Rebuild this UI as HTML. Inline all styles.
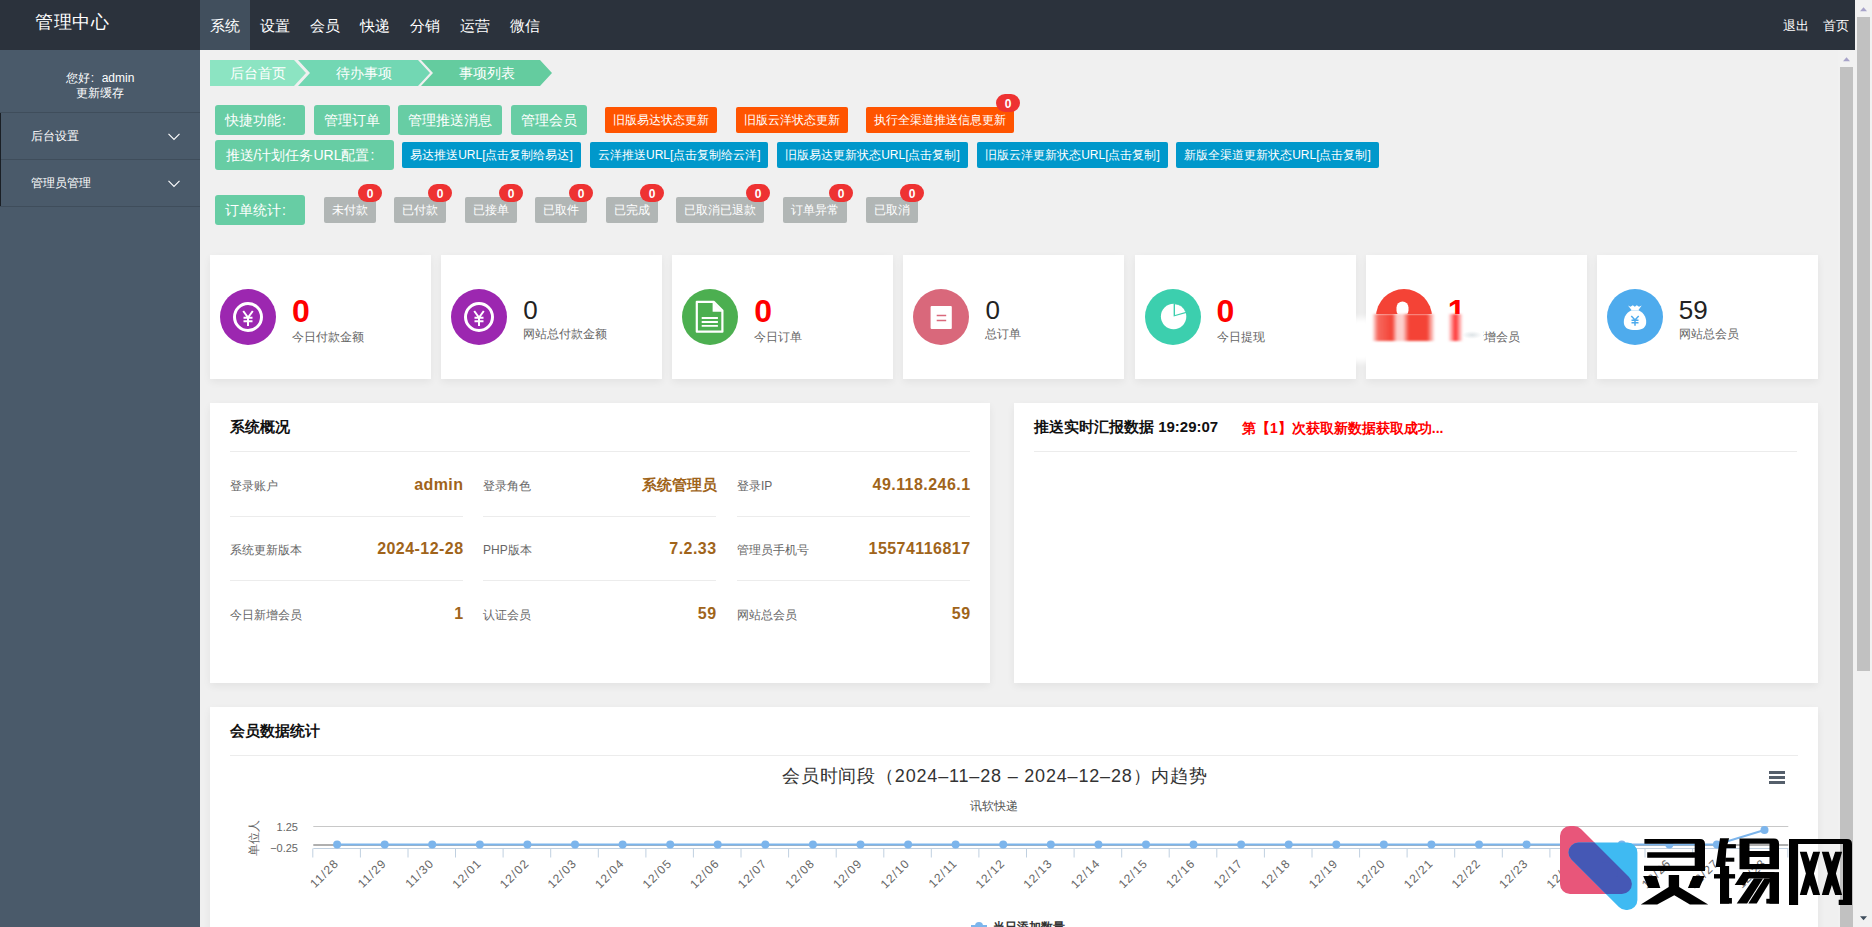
<!DOCTYPE html>
<html><head><meta charset="utf-8">
<style>
*{box-sizing:border-box;margin:0;padding:0}
html,body{width:1872px;height:927px;overflow:hidden}
body{position:relative;background:#f0f0f0;font-family:"Liberation Sans",sans-serif;color:#333}
.abs{position:absolute}
#hdr{left:0;top:0;width:1855px;height:50px;background:#2b323c}
#logo{left:35px;top:10px;font-size:18px;color:#fff;line-height:24px;letter-spacing:0.5px}
.nav{top:0;height:50px;width:50px;color:#fff;font-size:15px;line-height:52px;text-align:center}
.nav.on{background:#414f5d}
.tr{top:0;height:50px;color:#fff;font-size:13px;line-height:52px}
#side{left:0;top:50px;width:200px;height:877px;background:#4a5a6a}
#user{left:0;top:70.5px;width:200px;text-align:center;color:#fff;font-size:12px;line-height:15.5px}
.mi{left:0;width:200px;height:47px;border-top:1px solid #3f4d5b;color:#fff;font-size:12px;line-height:47.5px;padding-left:31px}
.mi svg{position:absolute;left:168px;top:19.5px}
#sideb{left:0;top:113px;width:1px;height:93px;background:#1a1f25}
/* scrollbars */
.sb{background:#f1f1f1}
.thumb{background:#c1c1c1}
/* content */
.bc{top:60px;height:26px}
.btn{position:absolute;color:#fff;white-space:nowrap;text-align:center;border-radius:3px}
.g{background:#67cda4;height:30px;line-height:30px;font-size:14px;padding:0 10px}
.o{background:#ff5400;height:26px;line-height:26px;font-size:12px;padding:0 8px;border-radius:2px}
.b{background:#0098cb;height:26px;line-height:26px;font-size:12px;padding:0 8px;border-radius:2px}
.gr{background:#b1b6b5;height:26px;line-height:26px;font-size:12px;padding:0 8px;border-radius:2px}
.badge{position:absolute;width:24px;height:18px;border-radius:9px;background:#ee3232;color:#fff;font-size:12px;font-weight:bold;line-height:20px;text-align:center}
.card{position:absolute;background:#fff;box-shadow:0 3px 8px rgba(0,0,0,0.06)}
.stat{top:255px;width:221px;height:124px}
.ico{position:absolute;left:10px;top:34px;width:56px;height:56px;border-radius:50%}
.ico svg{position:absolute;left:0;top:0}
.num{position:absolute;left:82px;font-size:27px;line-height:30px}
.num.r{color:#f00;font-weight:bold;top:38px;font-size:32px;line-height:36px}
.num.k{color:#222;top:40px;font-size:26px;line-height:30px}
.lbl{position:absolute;left:82px;font-size:12px;color:#666;line-height:14px;white-space:nowrap}
.ttl{position:absolute;left:20px;font-size:15px;font-weight:bold;color:#111;line-height:20px}
.sep{position:absolute;height:1px;background:#ececec}
.rl{position:absolute;font-size:12px;color:#666;line-height:16px}
.rv{position:absolute;font-size:16px;font-weight:bold;color:#a0641a;line-height:18px;text-align:right;letter-spacing:0.45px;margin-right:-0.45px}
</style></head><body>
<!-- header -->
<div id="hdr" class="abs"></div>
<div id="logo" class="abs">管理中心</div>
<div class="abs nav on" style="left:200px">系统</div>
<div class="abs nav" style="left:250px">设置</div>
<div class="abs nav" style="left:300px">会员</div>
<div class="abs nav" style="left:350px">快递</div>
<div class="abs nav" style="left:400px">分销</div>
<div class="abs nav" style="left:450px">运营</div>
<div class="abs nav" style="left:500px">微信</div>
<div class="abs tr" style="left:1783px">退出</div>
<div class="abs tr" style="left:1823px">首页</div>

<!-- sidebar -->
<div id="side" class="abs"></div>
<div id="user" class="abs">您好<span style="display:inline-block;width:12px;text-align:left;padding-left:1px">:</span>admin<br>更新缓存</div>
<div class="abs mi" style="top:112px">后台设置<svg width="12" height="8" viewBox="0 0 12 8"><path d="M0.5 0.8 L6 6.5 L11.5 0.8" fill="none" stroke="#fff" stroke-width="1.1"/></svg></div>
<div class="abs mi" style="top:159px">管理员管理<svg width="12" height="8" viewBox="0 0 12 8"><path d="M0.5 0.8 L6 6.5 L11.5 0.8" fill="none" stroke="#fff" stroke-width="1.1"/></svg></div>
<div class="abs" style="left:0;top:206px;width:200px;height:1px;background:#3f4d5b"></div>
<div id="sideb" class="abs"></div>

<!-- content area -->
<!-- breadcrumb -->
<svg class="abs" style="left:200px;top:50px" width="400" height="50">
<polygon points="10,10 94,10 106,23 94,36 10,36" fill="#8ce4c2"/>
<polygon points="98,10 218,10 230,23 218,36 98,36 110,23" fill="#72d7b3"/>
<polygon points="221,10 340,10 352,23 340,36 221,36 233,23" fill="#64cc9f"/>
</svg>
<div class="abs" style="left:210px;top:64px;width:96px;text-align:center;color:#fff;font-size:14px;line-height:18px">后台首页</div>
<div class="abs" style="left:310px;top:64px;width:108px;text-align:center;color:#fff;font-size:14px;line-height:18px">待办事项</div>
<div class="abs" style="left:433px;top:64px;width:108px;text-align:center;color:#fff;font-size:14px;line-height:18px">事项列表</div>

<!-- row 1 -->
<div class="btn g" style="left:215px;top:105px;width:90px">快捷功能<span style="display:inline-block;width:14px;text-align:left;padding-left:1px">:</span></div>
<div class="btn g" style="left:314px;top:105px;width:76px">管理订单</div>
<div class="btn g" style="left:398px;top:105px;width:104px">管理推送消息</div>
<div class="btn g" style="left:511px;top:105px;width:76px">管理会员</div>
<div class="btn o" style="left:605px;top:107px;width:112px">旧版易达状态更新</div>
<div class="btn o" style="left:736px;top:107px;width:112px">旧版云洋状态更新</div>
<div class="btn o" style="left:866px;top:107px;width:148px">执行全渠道推送信息更新</div>
<div class="badge" style="left:996px;top:94px">0</div>
<!-- row 2 -->
<div class="btn g" style="left:215px;top:140px;width:179px">推送/计划任务URL配置<span style="display:inline-block;width:14px;text-align:left;padding-left:1px">:</span></div>
<div class="btn b" style="left:402px;top:142px;width:179px">易达推送URL[点击复制给易达]</div>
<div class="btn b" style="left:590px;top:142px;width:178px">云洋推送URL[点击复制给云洋]</div>
<div class="btn b" style="left:777px;top:142px;width:191px">旧版易达更新状态URL[点击复制]</div>
<div class="btn b" style="left:977px;top:142px;width:191px">旧版云洋更新状态URL[点击复制]</div>
<div class="btn b" style="left:1176px;top:142px;width:203px">新版全渠道更新状态URL[点击复制]</div>
<!-- row 3 -->
<div class="btn g" style="left:215px;top:195px;width:90px">订单统计<span style="display:inline-block;width:14px;text-align:left;padding-left:1px">:</span></div>
<div class="btn gr" style="left:324px;top:197px;width:52px">未付款</div>
<div class="badge" style="left:358px;top:184px">0</div>
<div class="btn gr" style="left:394px;top:197px;width:52px">已付款</div>
<div class="badge" style="left:428px;top:184px">0</div>
<div class="btn gr" style="left:465px;top:197px;width:52px">已接单</div>
<div class="badge" style="left:499px;top:184px">0</div>
<div class="btn gr" style="left:535px;top:197px;width:52px">已取件</div>
<div class="badge" style="left:569px;top:184px">0</div>
<div class="btn gr" style="left:606px;top:197px;width:52px">已完成</div>
<div class="badge" style="left:640px;top:184px">0</div>
<div class="btn gr" style="left:676px;top:197px;width:88px">已取消已退款</div>
<div class="badge" style="left:746px;top:184px">0</div>
<div class="btn gr" style="left:783px;top:197px;width:64px">订单异常</div>
<div class="badge" style="left:829px;top:184px">0</div>
<div class="btn gr" style="left:866px;top:197px;width:52px">已取消</div>
<div class="badge" style="left:900px;top:184px">0</div>

<!-- stat cards -->
<div class="card stat" style="left:210.00px">
  <div class="ico" style="background:#9c27b0"><svg width="56" height="56" viewBox="0 0 56 56"><circle cx="28" cy="28" r="13.5" fill="none" stroke="#fff" stroke-width="3"/><path d="M23.2 22 L28 28.5 L32.8 22 M28 28.5 V37 M23.5 28.7 H32.5 M23.5 32.3 H32.5" fill="none" stroke="#fff" stroke-width="2"/></svg></div>
  <div class="num r">0</div>
  <div class="lbl" style="top:75px">今日付款金额</div>
</div>
<div class="card stat" style="left:441.14px">
  <div class="ico" style="background:#9c27b0"><svg width="56" height="56" viewBox="0 0 56 56"><circle cx="28" cy="28" r="13.5" fill="none" stroke="#fff" stroke-width="3"/><path d="M23.2 22 L28 28.5 L32.8 22 M28 28.5 V37 M23.5 28.7 H32.5 M23.5 32.3 H32.5" fill="none" stroke="#fff" stroke-width="2"/></svg></div>
  <div class="num k">0</div>
  <div class="lbl" style="top:72px">网站总付款金额</div>
</div>
<div class="card stat" style="left:672.29px">
  <div class="ico" style="background:#4caf50"><svg width="56" height="56" viewBox="0 0 56 56"><path d="M14.8 12.8 H31.7 L40.4 21.6 V42.7 H14.8 Z" fill="none" stroke="#fff" stroke-width="2.2" stroke-linejoin="round"/><path d="M30.6 12.8 V22.7 H40.4 Z" fill="#fff"/><path d="M19.7 29 H35.9 M19.7 33 H35.9 M19.7 36.9 H35.9" stroke="#fff" stroke-width="1.8"/></svg></div>
  <div class="num r">0</div>
  <div class="lbl" style="top:75px">今日订单</div>
</div>
<div class="card stat" style="left:903.43px">
  <div class="ico" style="background:#d9687b"><svg width="56" height="56" viewBox="0 0 56 56"><rect x="17.6" y="17" width="21.2" height="23" rx="1" fill="#fff"/><path d="M23.7 26.5 H33.2 M23.7 31.5 H33.2" stroke="#d9687b" stroke-width="1.5"/></svg></div>
  <div class="num k">0</div>
  <div class="lbl" style="top:72px">总订单</div>
</div>
<div class="card stat" style="left:1134.57px">
  <div class="ico" style="background:#3ccfae"><svg width="56" height="56" viewBox="0 0 56 56"><circle cx="28.6" cy="27.5" r="12.7" fill="#fff"/><path d="M28.6 27.5 L28.6 14.3 A13.2 13.2 0 0 1 41.3 24 Z" fill="#3ccfae"/><path d="M30 26 L30 15.2 A12.5 12.5 0 0 1 40.3 22.9 Z" fill="#fff"/></svg></div>
  <div class="num r">0</div>
  <div class="lbl" style="top:75px">今日提现</div>
</div>
<div class="card stat" style="left:1365.71px">
  <div class="ico" style="background:#f44336"><svg width="56" height="56" viewBox="0 0 56 56"><rect x="20.5" y="12.5" width="12" height="15" rx="6" fill="#fff"/></svg></div>
  <div class="num r">1</div>
  <div class="lbl" style="top:75px">今日新增会员</div>
</div>
<div class="card stat" style="left:1596.86px">
  <div class="ico" style="background:#4eabed"><svg width="56" height="56" viewBox="0 0 56 56"><path d="M21 16.5 L23.5 17.8 L25.8 16.2 L27.8 17.8 L29.8 16.2 L32 17.8 L34.7 16.5 L31.5 21 H24.5Z" fill="#fff"/><path d="M24.5 21.3 H31.5 C37.5 24 40 30 39 35 C38 39.5 34 41 28 41 C22 41 18 39.5 17 35 C16 30 18.5 24 24.5 21.3Z" fill="#fff"/><path d="M24.3 27 L28 31 L31.7 27 M28 31 V36.8 M24.5 31.3 H31.5 M24.5 33.8 H31.5" fill="none" stroke="#4eabed" stroke-width="1.5"/></svg></div>
  <div class="num k">59</div>
  <div class="lbl" style="top:72px">网站总会员</div>
</div>
<!-- blur artifact over card 6 -->
<div class="abs" style="left:1350px;top:318px;width:22px;height:44px;background:#fff;filter:blur(3px)"></div>
<div class="abs" style="left:1366px;top:314px;width:117px;height:64px;background:#fff"></div>
<div class="abs" style="left:1372px;top:314px;width:64px;height:27px;filter:blur(1.2px);background:linear-gradient(to right,rgba(244,67,54,0) 0,rgba(244,67,54,.8) 6px,#f44336 20px,rgba(244,67,54,.25) 25px,rgba(244,67,54,.25) 31px,#f44336 37px,#f44336 55px,rgba(244,67,54,0) 63px)"></div>
<div class="abs" style="left:1448px;top:314px;width:15px;height:27px;filter:blur(1px);background:linear-gradient(to right,rgba(255,0,0,0),rgba(255,30,30,.9) 50%,rgba(255,0,0,0))"></div>
<div class="abs" style="left:1462px;top:331px;width:20px;height:8px;background:radial-gradient(ellipse at center,rgba(200,210,215,.6),rgba(255,255,255,0) 70%)"></div>

<!-- system overview -->
<div class="card" style="left:210px;top:403px;width:780px;height:280px">
  <div class="ttl" style="top:14px">系统概况</div>
  <div class="sep" style="left:20px;top:48px;width:740px"></div>
  <div class="rl" style="left:20px;top:74.5px">登录账户</div><div class="rv" style="left:20px;top:73px;width:233.5px">admin</div>
  <div class="rl" style="left:273px;top:74.5px">登录角色</div><div class="rv" style="left:273px;top:73px;width:233.5px;font-size:15px;letter-spacing:0">系统管理员</div>
  <div class="rl" style="left:527px;top:74.5px">登录IP</div><div class="rv" style="left:527px;top:73px;width:233.5px">49.118.246.1</div>
  <div class="sep" style="left:20px;top:113px;width:233px"></div><div class="sep" style="left:273px;top:113px;width:233px"></div><div class="sep" style="left:527px;top:113px;width:233px"></div>
  <div class="rl" style="left:20px;top:138.5px">系统更新版本</div><div class="rv" style="left:20px;top:137px;width:233.5px">2024-12-28</div>
  <div class="rl" style="left:273px;top:138.5px">PHP版本</div><div class="rv" style="left:273px;top:137px;width:233.5px">7.2.33</div>
  <div class="rl" style="left:527px;top:138.5px">管理员手机号</div><div class="rv" style="left:527px;top:137px;width:233.5px">15574116817</div>
  <div class="sep" style="left:20px;top:177px;width:233px"></div><div class="sep" style="left:273px;top:177px;width:233px"></div><div class="sep" style="left:527px;top:177px;width:233px"></div>
  <div class="rl" style="left:20px;top:203.5px">今日新增会员</div><div class="rv" style="left:20px;top:202px;width:233.5px">1</div>
  <div class="rl" style="left:273px;top:203.5px">认证会员</div><div class="rv" style="left:273px;top:202px;width:233.5px">59</div>
  <div class="rl" style="left:527px;top:203.5px">网站总会员</div><div class="rv" style="left:527px;top:202px;width:233.5px">59</div>
</div>
<!-- push report -->
<div class="card" style="left:1014px;top:403px;width:804px;height:280px">
  <div class="ttl" style="top:14px;font-size:15px">推送实时汇报数据 19:29:07</div>
  <div class="abs" style="left:228px;top:15px;font-size:14px;font-weight:bold;color:#f00;line-height:20px">第【1】次获取新数据获取成功...</div>
  <div class="sep" style="left:20px;top:48px;width:763px"></div>
</div>
<!-- member stats -->
<div class="card" style="left:210px;top:707px;width:1608px;height:240px">
  <div class="ttl" style="top:14px">会员数据统计</div>
  <div class="sep" style="left:20px;top:48px;width:1568px"></div>
</div>
<div id="chart"></div>
<svg class="abs" style="left:0;top:0" width="1872" height="927" viewBox="0 0 1872 927" font-family="Liberation Sans, sans-serif">
<text x="782" y="782" font-size="18" fill="#333" textLength="425" lengthAdjust="spacing">会员时间段（2024–11–28 – 2024–12–28）内趋势</text>
<text x="993.6" y="809.5" text-anchor="middle" font-size="12" fill="#555">讯软快递</text>
<path d="M1769 772.5 H1785 M1769 777.5 H1785 M1769 782.5 H1785" stroke="#555f6b" stroke-width="3"/>
<text x="257.5" y="838" transform="rotate(-90 257.5 838)" text-anchor="middle" font-size="12" fill="#666">单位人</text>
<text x="298" y="831" text-anchor="end" font-size="11" fill="#666">1.25</text>
<text x="298" y="852" text-anchor="end" font-size="11" fill="#666">−0.25</text>
<path d="M313.3 826.5 H1788.3" stroke="#c8c8c8" stroke-width="1"/>
<path d="M313.3 845 H1788.3" stroke="#606060" stroke-width="1"/>
<path d="M313.3 848.5 H1788.3" stroke="#c0d0e0" stroke-width="1"/>
<path d="M312.8 848.5 V857.5 M360.4 848.5 V857.5 M408.0 848.5 V857.5 M455.5 848.5 V857.5 M503.1 848.5 V857.5 M550.7 848.5 V857.5 M598.3 848.5 V857.5 M645.9 848.5 V857.5 M693.4 848.5 V857.5 M741.0 848.5 V857.5 M788.6 848.5 V857.5 M836.2 848.5 V857.5 M883.8 848.5 V857.5 M931.3 848.5 V857.5 M978.9 848.5 V857.5 M1026.5 848.5 V857.5 M1074.1 848.5 V857.5 M1121.7 848.5 V857.5 M1169.2 848.5 V857.5 M1216.8 848.5 V857.5 M1264.4 848.5 V857.5 M1312.0 848.5 V857.5 M1359.6 848.5 V857.5 M1407.1 848.5 V857.5 M1454.7 848.5 V857.5 M1502.3 848.5 V857.5 M1549.9 848.5 V857.5 M1597.5 848.5 V857.5 M1645.0 848.5 V857.5 M1692.6 848.5 V857.5 M1740.2 848.5 V857.5 M1787.8 848.5 V857.5" stroke="#c0d0e0" stroke-width="1"/>
<polyline points="337.1,844.5 384.7,844.5 432.2,844.5 479.8,844.5 527.4,844.5 575.0,844.5 622.6,844.5 670.2,844.5 717.7,844.5 765.3,844.5 812.9,844.5 860.5,844.5 908.1,844.5 955.6,844.5 1003.2,844.5 1050.8,844.5 1098.4,844.5 1146.0,844.5 1193.5,844.5 1241.1,844.5 1288.7,844.5 1336.3,844.5 1383.8,844.5 1431.4,844.5 1479.0,844.5 1526.6,844.5 1574.2,844.5 1621.8,844.5 1669.3,844.5 1716.9,844.5 1764.5,830" fill="none" stroke="#7cb5ec" stroke-width="2"/>
<circle cx="337.1" cy="844.5" r="4" fill="#7cb5ec"/>
<circle cx="384.7" cy="844.5" r="4" fill="#7cb5ec"/>
<circle cx="432.2" cy="844.5" r="4" fill="#7cb5ec"/>
<circle cx="479.8" cy="844.5" r="4" fill="#7cb5ec"/>
<circle cx="527.4" cy="844.5" r="4" fill="#7cb5ec"/>
<circle cx="575.0" cy="844.5" r="4" fill="#7cb5ec"/>
<circle cx="622.6" cy="844.5" r="4" fill="#7cb5ec"/>
<circle cx="670.2" cy="844.5" r="4" fill="#7cb5ec"/>
<circle cx="717.7" cy="844.5" r="4" fill="#7cb5ec"/>
<circle cx="765.3" cy="844.5" r="4" fill="#7cb5ec"/>
<circle cx="812.9" cy="844.5" r="4" fill="#7cb5ec"/>
<circle cx="860.5" cy="844.5" r="4" fill="#7cb5ec"/>
<circle cx="908.1" cy="844.5" r="4" fill="#7cb5ec"/>
<circle cx="955.6" cy="844.5" r="4" fill="#7cb5ec"/>
<circle cx="1003.2" cy="844.5" r="4" fill="#7cb5ec"/>
<circle cx="1050.8" cy="844.5" r="4" fill="#7cb5ec"/>
<circle cx="1098.4" cy="844.5" r="4" fill="#7cb5ec"/>
<circle cx="1146.0" cy="844.5" r="4" fill="#7cb5ec"/>
<circle cx="1193.5" cy="844.5" r="4" fill="#7cb5ec"/>
<circle cx="1241.1" cy="844.5" r="4" fill="#7cb5ec"/>
<circle cx="1288.7" cy="844.5" r="4" fill="#7cb5ec"/>
<circle cx="1336.3" cy="844.5" r="4" fill="#7cb5ec"/>
<circle cx="1383.8" cy="844.5" r="4" fill="#7cb5ec"/>
<circle cx="1431.4" cy="844.5" r="4" fill="#7cb5ec"/>
<circle cx="1479.0" cy="844.5" r="4" fill="#7cb5ec"/>
<circle cx="1526.6" cy="844.5" r="4" fill="#7cb5ec"/>
<circle cx="1574.2" cy="844.5" r="4" fill="#7cb5ec"/>
<circle cx="1621.8" cy="844.5" r="4" fill="#7cb5ec"/>
<circle cx="1669.3" cy="844.5" r="4" fill="#7cb5ec"/>
<circle cx="1716.9" cy="844.5" r="4" fill="#7cb5ec"/>
<circle cx="1764.5" cy="830" r="4" fill="#7cb5ec"/>
<text x="339.6" y="864" transform="rotate(-45 339.6 864)" text-anchor="end" font-size="12" letter-spacing="1.1" fill="#666">11/28</text>
<text x="387.2" y="864" transform="rotate(-45 387.2 864)" text-anchor="end" font-size="12" letter-spacing="1.1" fill="#666">11/29</text>
<text x="434.7" y="864" transform="rotate(-45 434.7 864)" text-anchor="end" font-size="12" letter-spacing="1.1" fill="#666">11/30</text>
<text x="482.3" y="864" transform="rotate(-45 482.3 864)" text-anchor="end" font-size="12" letter-spacing="1.1" fill="#666">12/01</text>
<text x="529.9" y="864" transform="rotate(-45 529.9 864)" text-anchor="end" font-size="12" letter-spacing="1.1" fill="#666">12/02</text>
<text x="577.5" y="864" transform="rotate(-45 577.5 864)" text-anchor="end" font-size="12" letter-spacing="1.1" fill="#666">12/03</text>
<text x="625.1" y="864" transform="rotate(-45 625.1 864)" text-anchor="end" font-size="12" letter-spacing="1.1" fill="#666">12/04</text>
<text x="672.7" y="864" transform="rotate(-45 672.7 864)" text-anchor="end" font-size="12" letter-spacing="1.1" fill="#666">12/05</text>
<text x="720.2" y="864" transform="rotate(-45 720.2 864)" text-anchor="end" font-size="12" letter-spacing="1.1" fill="#666">12/06</text>
<text x="767.8" y="864" transform="rotate(-45 767.8 864)" text-anchor="end" font-size="12" letter-spacing="1.1" fill="#666">12/07</text>
<text x="815.4" y="864" transform="rotate(-45 815.4 864)" text-anchor="end" font-size="12" letter-spacing="1.1" fill="#666">12/08</text>
<text x="863.0" y="864" transform="rotate(-45 863.0 864)" text-anchor="end" font-size="12" letter-spacing="1.1" fill="#666">12/09</text>
<text x="910.6" y="864" transform="rotate(-45 910.6 864)" text-anchor="end" font-size="12" letter-spacing="1.1" fill="#666">12/10</text>
<text x="958.1" y="864" transform="rotate(-45 958.1 864)" text-anchor="end" font-size="12" letter-spacing="1.1" fill="#666">12/11</text>
<text x="1005.7" y="864" transform="rotate(-45 1005.7 864)" text-anchor="end" font-size="12" letter-spacing="1.1" fill="#666">12/12</text>
<text x="1053.3" y="864" transform="rotate(-45 1053.3 864)" text-anchor="end" font-size="12" letter-spacing="1.1" fill="#666">12/13</text>
<text x="1100.9" y="864" transform="rotate(-45 1100.9 864)" text-anchor="end" font-size="12" letter-spacing="1.1" fill="#666">12/14</text>
<text x="1148.5" y="864" transform="rotate(-45 1148.5 864)" text-anchor="end" font-size="12" letter-spacing="1.1" fill="#666">12/15</text>
<text x="1196.0" y="864" transform="rotate(-45 1196.0 864)" text-anchor="end" font-size="12" letter-spacing="1.1" fill="#666">12/16</text>
<text x="1243.6" y="864" transform="rotate(-45 1243.6 864)" text-anchor="end" font-size="12" letter-spacing="1.1" fill="#666">12/17</text>
<text x="1291.2" y="864" transform="rotate(-45 1291.2 864)" text-anchor="end" font-size="12" letter-spacing="1.1" fill="#666">12/18</text>
<text x="1338.8" y="864" transform="rotate(-45 1338.8 864)" text-anchor="end" font-size="12" letter-spacing="1.1" fill="#666">12/19</text>
<text x="1386.3" y="864" transform="rotate(-45 1386.3 864)" text-anchor="end" font-size="12" letter-spacing="1.1" fill="#666">12/20</text>
<text x="1433.9" y="864" transform="rotate(-45 1433.9 864)" text-anchor="end" font-size="12" letter-spacing="1.1" fill="#666">12/21</text>
<text x="1481.5" y="864" transform="rotate(-45 1481.5 864)" text-anchor="end" font-size="12" letter-spacing="1.1" fill="#666">12/22</text>
<text x="1529.1" y="864" transform="rotate(-45 1529.1 864)" text-anchor="end" font-size="12" letter-spacing="1.1" fill="#666">12/23</text>
<text x="1576.7" y="864" transform="rotate(-45 1576.7 864)" text-anchor="end" font-size="12" letter-spacing="1.1" fill="#666">12/24</text>
<text x="1624.3" y="864" transform="rotate(-45 1624.3 864)" text-anchor="end" font-size="12" letter-spacing="1.1" fill="#666">12/25</text>
<text x="1671.8" y="864" transform="rotate(-45 1671.8 864)" text-anchor="end" font-size="12" letter-spacing="1.1" fill="#666">12/26</text>
<text x="1719.4" y="864" transform="rotate(-45 1719.4 864)" text-anchor="end" font-size="12" letter-spacing="1.1" fill="#666">12/27</text>
<text x="1767.0" y="864" transform="rotate(-45 1767.0 864)" text-anchor="end" font-size="12" letter-spacing="1.1" fill="#666">12/28</text>
<path d="M971 926 H987" stroke="#7cb5ec" stroke-width="2"/><circle cx="979" cy="926" r="4" fill="#7cb5ec"/>
<text x="992.5" y="931" font-size="12" font-weight="bold" fill="#333">当日添加数量</text>
</svg>

<div id="content"></div>


<!-- scrollbars -->
<div class="abs sb" style="left:1838px;top:50px;width:17px;height:877px"></div>
<div class="abs thumb" style="left:1840px;top:67px;width:13px;height:860px"></div>
<svg class="abs" style="left:1843px;top:56.5px" width="7" height="5"><path d="M0 4.3 L3.5 0.3 L7 4.3Z" fill="#a7a3c9"/></svg>
<div class="abs sb" style="left:1855px;top:0;width:17px;height:927px"></div>
<div class="abs thumb" style="left:1857px;top:17px;width:13px;height:654px"></div>
<svg class="abs" style="left:1860px;top:6.7px" width="7" height="5"><path d="M0 4.3 L3.5 0.3 L7 4.3Z" fill="#a7a3c9"/></svg>
<svg class="abs" style="left:1860px;top:915.5px" width="7" height="5"><path d="M0 0.3 L3.5 4.3 L7 0.3Z" fill="#3e4d5c"/></svg>
<svg class="abs" style="left:1540px;top:815px" width="332" height="112" viewBox="1540 815 332 112">
<defs><mask id="pm" maskUnits="userSpaceOnUse" x="1540" y="815" width="332" height="112"><polygon points="1570,836 1573.9,836 1621.9,884 1570,884" fill="#fff" stroke="#fff" stroke-width="20" stroke-linejoin="round"/></mask></defs>
<polygon points="1570,836 1573.9,836 1621.9,884 1570,884" fill="#e8567a" stroke="#e8567a" stroke-width="20" stroke-linejoin="round"/>
<polygon points="1578.5,852.5 1627.4,852.5 1627.4,900 1626,900" fill="#3fbaf2" stroke="#3fbaf2" stroke-width="20" stroke-linejoin="round"/>
<polygon mask="url(#pm)" points="1578.5,852.5 1627.4,852.5 1627.4,900 1626,900" fill="#4558b5" stroke="#4558b5" stroke-width="20" stroke-linejoin="round"/>
<g fill="#000">
<!-- 灵 -->
<path d="M1644.4 839 H1700 Q1705 839 1705 844 V871 H1644 V865.7 H1694.7 V857.7 H1647.2 V852.2 H1694.7 V843.8 H1644.4Z"/>
<polygon points="1643.2,876.1 1656.4,876.1 1660.3,888.1 1648.4,888.1"/>
<polygon points="1693,876.1 1704.6,876.1 1699.5,888.1 1687.9,888.1"/>
<polygon points="1668.7,874.9 1679.1,874.9 1679.1,886.9 1708.2,904.4 1689.9,904.4 1674.3,895.3 1657.2,904.4 1640.8,904.4 1668.7,886.9"/>
<!-- 锡 -->
<polygon points="1720,838.2 1729.1,838.2 1726.4,848.2 1725.2,866.9 1715.6,866.9"/>
<rect x="1726" y="844.2" width="9.9" height="4"/>
<rect x="1725.2" y="857.7" width="9.1" height="4"/>
<rect x="1714" y="874.1" width="21.1" height="4.4"/>
<rect x="1720" y="866" width="9.1" height="37.6"/>
<rect x="1720" y="898" width="11.9" height="5.6"/>
<path d="M1739.5 838.6 H1774 Q1779 838.6 1779 843.6 V869.3 H1739.5Z M1749.5 843.8 V851 H1769.5 V843.8Z M1749.5 857 V864.1 H1769.5 V857Z" fill-rule="evenodd"/>
<polygon points="1743.1,872.1 1774,872.1 1779,877 1779,878.5 1743.1,878.5"/>
<rect x="1769.5" y="872.1" width="9.5" height="31.5"/>
<rect x="1766.3" y="898.8" width="12.7" height="4.8"/>
<polygon points="1743.1,872.1 1752.7,872.1 1744.7,884.9 1734.7,884.9"/>
<polygon points="1753.9,878.5 1763.1,878.5 1747.1,903.6 1736.7,903.6"/>
<polygon points="1764.3,878.5 1772,878.5 1756.7,903.6 1748.3,903.6"/>
<!-- 网 -->
<path d="M1789 838.9 H1847 Q1852 838.9 1852 843.9 V904.9 H1838.7 V899.7 H1843 V844.1 H1798.1 V904.9 H1789Z"/>
<polygon points="1799.8,851.8 1806.7,851.8 1809.9,861.8 1813.2,851.8 1820.1,851.8 1813.9,873.4 1820.1,895.0 1813.2,895.0 1809.9,885.0 1806.7,895.0 1799.8,895.0 1805.9,873.4"/>
<polygon points="1821.8,851.8 1828.7,851.8 1831.9,861.8 1835.2,851.8 1842.1,851.8 1835.9,873.4 1842.1,895.0 1835.2,895.0 1831.9,885.0 1828.7,895.0 1821.8,895.0 1827.9,873.4"/>
</g>
</svg>
</body></html>
